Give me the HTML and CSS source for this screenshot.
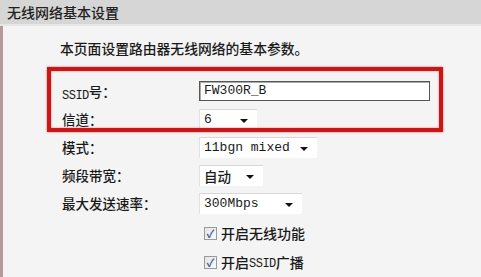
FILE: index.html
```html
<!DOCTYPE html>
<html lang="zh-CN">
<head>
    <meta charset="UTF-8">
    <title>无线网络基本设置</title>
    <link rel="stylesheet" href="styles.css">
</head>
<body>

    <div class="header">无线网络基本设置</div>

    <div class="panel">
        <p class="intro">本页面设置路由器无线网络的基本参数。</p>

        <!-- red annotation drawn over the first two rows -->
        <div class="highlight"></div>

        <div class="form">
            <div class="row">
                <span class="label"><span class="mono-small">SSID</span>号：</span>
                <span class="text-input">FW300R_B</span>
            </div>
            <div class="row">
                <span class="label">信道：</span>
                <span class="select w-channel">6<i class="arrow"></i></span>
            </div>
            <div class="row">
                <span class="label">模式：</span>
                <span class="select w-mode">11bgn mixed<i class="arrow"></i></span>
            </div>
            <div class="row">
                <span class="label">频段带宽：</span>
                <span class="select w-band cjk">自动<i class="arrow"></i></span>
            </div>
            <div class="row">
                <span class="label">最大发送速率：</span>
                <span class="select w-rate">300Mbps<i class="arrow"></i></span>
            </div>
            <div class="row check-row first-check">
                <span class="label"></span>
                <span class="check"><span class="box">&#10003;</span>开启无线功能</span>
            </div>
            <div class="row check-row">
                <span class="label"></span>
                <span class="check"><span class="box">&#10003;</span>开启<span class="mono-small">SSID</span>广播</span>
            </div>
        </div>
    </div>

</body>
</html>
```

FILE: styles.css
```css
body {
    margin: 0;
    background-color: #f4f4f4;
    font-family: "Noto Sans CJK SC", "Liberation Sans", sans-serif;
    color: #1a1a1a;
    font-size: 13.5px;
    overflow: hidden;
}
.header {
    height: 24px;
    line-height: 25px;
    padding-left: 7px;
    background-color: #d6d6d6;
    border-bottom: 2px solid #e6e6e6;
    font-size: 14px;
    font-weight: 500;
    color: #222;
}
.panel {
    position: relative;
    border-left: 3px solid #b5999c;
    height: 260px;
}
.intro {
    margin: 0;
    padding: 12px 0 0 57px;
    line-height: 20px;
    font-size: 13.8px;
    font-weight: 500;
}
.highlight {
    position: absolute;
    left: 44px;
    top: 41px;
    width: 396px;
    height: 65px;
    box-sizing: border-box;
    border: 4px solid #c91616;
    box-shadow: 0 0 2px #f06060, inset 0 0 2px #f06060;
    z-index: 2;
}
.form {
    margin-top: 19px;
}
.row {
    display: flex;
    align-items: center;
    height: 28px;
}
.label {
    width: 137px;
    padding-left: 59px;
    flex-shrink: 0;
    font-size: 13.5px;
    font-weight: 500;
}
.text-input {
    box-sizing: border-box;
    width: 231px;
    height: 20px;
    line-height: 18px;
    padding-left: 4px;
    background: #fff;
    border: 1px solid #555;
    box-shadow: inset 1px 1px 0 #aaa;
    font-family: "Liberation Mono", monospace;
    font-size: 13px;
}
.select {
    position: relative;
    box-sizing: border-box;
    height: 21px;
    line-height: 20px;
    padding-left: 4px;
    background: #fff;
    border-top: 1px solid #d8d8d8;
    border-left: 1px solid #e2e2e2;
    font-family: "Liberation Mono", monospace;
    font-size: 13px;
}
.select.cjk {
    font-family: "Noto Sans CJK SC", sans-serif;
    font-size: 13.5px;
    font-weight: 500;
}
.arrow {
    position: absolute;
    right: 9px;
    top: 9px;
    width: 0;
    height: 0;
    border-left: 4px solid transparent;
    border-right: 4px solid transparent;
    border-top: 4px solid #111;
}
.w-channel { width: 58px; }
.w-mode { width: 118px; }
.w-band { width: 64px; }
.w-rate { width: 103px; }
.check-row {
    height: 26px;
}
.first-check {
    height: 32px;
}
.check {
    display: flex;
    align-items: center;
    padding-left: 5px;
    font-size: 14px;
    font-weight: 500;
}
.box {
    box-sizing: border-box;
    width: 13px;
    height: 13px;
    margin-right: 4px;
    border: 1px solid #9a9a9a;
    background: linear-gradient(135deg, #e4e4e4, #fafafa);
    color: #44609c;
    font-size: 11px;
    line-height: 11px;
    text-align: center;
    font-weight: bold;
}
.mono-small {
    font-family: "Liberation Mono", monospace;
    font-size: 12px;
    letter-spacing: -0.5px;
    position: relative;
    top: 2px;
}
```
